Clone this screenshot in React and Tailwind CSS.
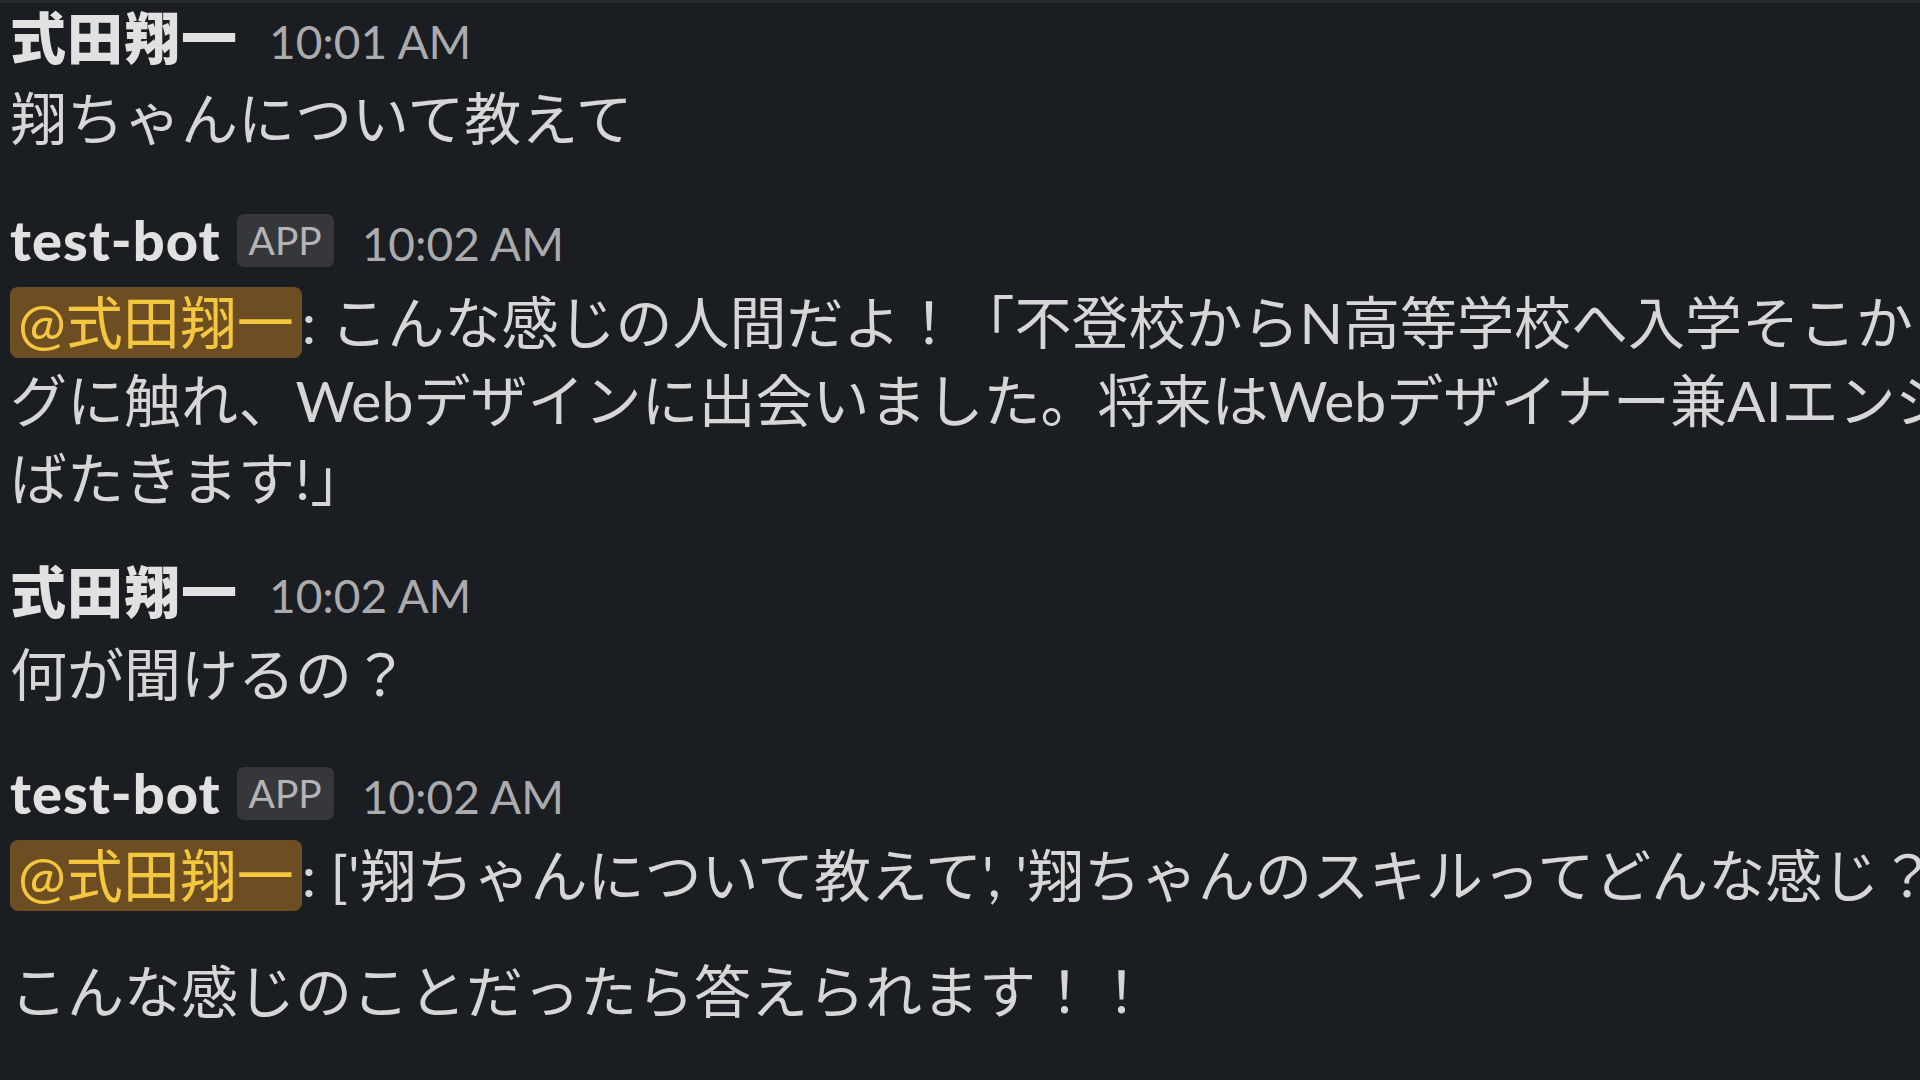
import React from "react";

function Header({ name, time, bot }) {
  return (
    <div className="flex items-baseline h-[70px] leading-[70px] mb-[8px] whitespace-nowrap">
      <span className="text-[56px] font-black tracking-[1px] text-[#e1e1e2]">{name}</span>
      {bot && (
        <span className="ml-[16px] self-start mt-[9px] inline-flex items-center justify-center h-[53px] w-[97px] rounded-[7px] bg-[#35373b] text-[39px] leading-none text-[#b4b4b6]">
          APP
        </span>
      )}
      <span className={`${bot ? "ml-[28px]" : "ml-[31px]"} text-[46px] text-[#ababad]`}>
        {time}
      </span>
    </div>
  );
}

function Mention() {
  return (
    <span className="inline-block leading-[71px] px-[8px] rounded-[8px] bg-[#6d4e22] text-[#f4c73f]">
      @式田翔一
    </span>
  );
}

function Line({ children, className = "" }) {
  return (
    <div className={`h-[78px] leading-[78px] whitespace-nowrap text-[57px] text-[#d6d6d7] ${className}`}>
      {children}
    </div>
  );
}

export default function App() {
  return (
    <div className="w-[1920px] h-[1080px] overflow-hidden bg-[#1a1d21] border-t-[3px] border-[#26282c] font-['Lato','Noto_Sans_CJK_JP',sans-serif]">
      <div className="pl-[10px]">
        {/* user message 1 */}
        <Header name="式田翔一" time="10:01 AM" />
        <Line className="-mt-[2px]">翔ちゃんについて教えて</Line>

        {/* bot reply 1 */}
        <div className="mt-[48px]">
          <Header name="test-bot" time="10:02 AM" bot />
          <Line className="mt-[3px]">
            <Mention />: こんな感じの人間だよ！「不登校からN高等学校へ入学そこからプログラミン
          </Line>
          <Line>グに触れ、Webデザインに出会いました。将来はWebデザイナー兼AIエンジニアとして羽</Line>
          <Line>ばたきます!」</Line>
        </div>

        {/* user message 2 */}
        <div className="mt-[40px]">
          <Header name="式田翔一" time="10:02 AM" />
          <Line>何が聞けるの？</Line>
        </div>

        {/* bot reply 2 */}
        <div className="mt-[45px]">
          <Header name="test-bot" time="10:02 AM" bot />
          <Line className="mt-[2px]">
            <Mention />: ['翔ちゃんについて教えて', '翔ちゃんのスキルってどんな感じ？', '翔ちゃんの夢は？']
          </Line>
          <Line className="mt-[38px]">こんな感じのことだったら答えられます！！</Line>
        </div>
      </div>
    </div>
  );
}
